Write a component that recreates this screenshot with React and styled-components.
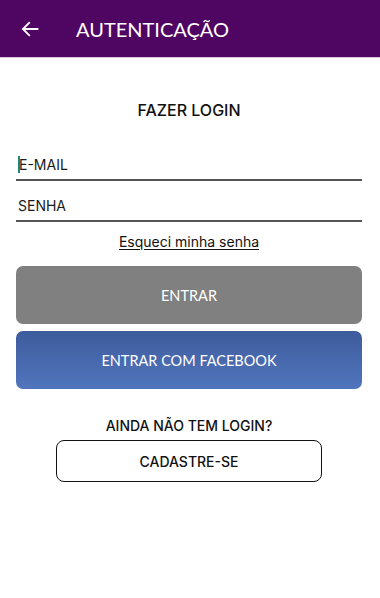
import styled, { createGlobalStyle } from "styled-components";

const Global = createGlobalStyle`
  html, body {
    margin: 0;
    padding: 0;
    background: #ffffff;
    font-family: "Inter", "Noto Sans", sans-serif;
  }
  * { box-sizing: border-box; }
`;

const Screen = styled.div`
  width: 380px;
  height: 598px;
  background: #fff;
  display: flex;
  flex-direction: column;
`;

const AppBar = styled.header`
  height: 58px;
  background: #4f0562;
  display: flex;
  align-items: center;
  padding: 0 0 0 19px;
  border-bottom: 1px solid #d9c8dd;
`;

const BackButton = styled.button`
  background: none;
  border: none;
  padding: 0;
  width: 22px;
  height: 22px;
  display: flex;
  align-items: center;
  justify-content: center;
  margin-right: 35px;
`;

const BarTitle = styled.h1`
  margin: 0;
  color: #fff;
  font-family: "Lato", sans-serif;
  font-weight: 400;
  font-size: 20px;
  letter-spacing: 0;
`;

const Content = styled.main`
  display: flex;
  flex-direction: column;
  padding: 42px 18px 0 16px;
`;

const Heading = styled.h2`
  margin: 0 0 23px;
  text-align: center;
  font-size: 16px;
  font-weight: 500;
  color: #111;
`;

const Field = styled.div`
  display: flex;
  align-items: center;
  height: 38px;
  border-bottom: 2px solid #555;
  padding: 6px 0 0 2px;
  margin-bottom: ${(p) => p.$gap || 0}px;
`;

const Placeholder = styled.span`
  font-size: 14px;
  color: #1a1a1a;
  display: flex;
  align-items: center;
`;

const Caret = styled.span`
  display: inline-block;
  width: 2px;
  height: 17px;
  background: #1e8a7a;
  margin-right: -1px;
`;

const Forgot = styled.a`
  align-self: center;
  margin: 11px 0 16px;
  font-size: 14px;
  color: #111;
  text-decoration: underline;
  text-underline-offset: 2px;
`;

const BigButton = styled.button`
  height: 58px;
  width: 100%;
  border: none;
  border-radius: 7px;
  color: #fff;
  font-family: "Lato", sans-serif;
  font-size: 14.5px;
  margin-bottom: 7px;
  background: ${(p) =>
    p.$facebook
      ? "linear-gradient(180deg, #3d5c9d 0%, #4a6bb0 60%, #5075bd 100%)"
      : "#808080"};
`;

const Question = styled.p`
  margin: 21px 0 6px;
  text-align: center;
  font-size: 14px;
  font-weight: 500;
  color: #111;
`;

const OutlineButton = styled.button`
  align-self: center;
  width: 266px;
  height: 42px;
  background: #fff;
  border: 1px solid #111;
  border-radius: 8px;
  font-family: "Inter", sans-serif;
  font-size: 14px;
  font-weight: 500;
  color: #111;
`;

export default function App() {
  return (
    <Screen>
      <Global />
      <AppBar>
        <BackButton aria-label="voltar">
          <svg width="20" height="20" viewBox="0 0 24 24" fill="none" stroke="#fff" strokeWidth="2.2" strokeLinecap="square">
            <path d="M21 12H4M11 4.5L3.5 12 11 19.5" />
          </svg>
        </BackButton>
        <BarTitle>AUTENTICAÇÃO</BarTitle>
      </AppBar>
      <Content>
        <Heading>FAZER LOGIN</Heading>
        <Field $gap={3}>
          <Placeholder>
            <Caret />
            E-MAIL
          </Placeholder>
        </Field>
        <Field>
          <Placeholder>SENHA</Placeholder>
        </Field>
        <Forgot>Esqueci minha senha</Forgot>
        <BigButton>ENTRAR</BigButton>
        <BigButton $facebook>ENTRAR COM FACEBOOK</BigButton>
        <Question>AINDA NÃO TEM LOGIN?</Question>
        <OutlineButton>CADASTRE-SE</OutlineButton>
      </Content>
    </Screen>
  );
}
